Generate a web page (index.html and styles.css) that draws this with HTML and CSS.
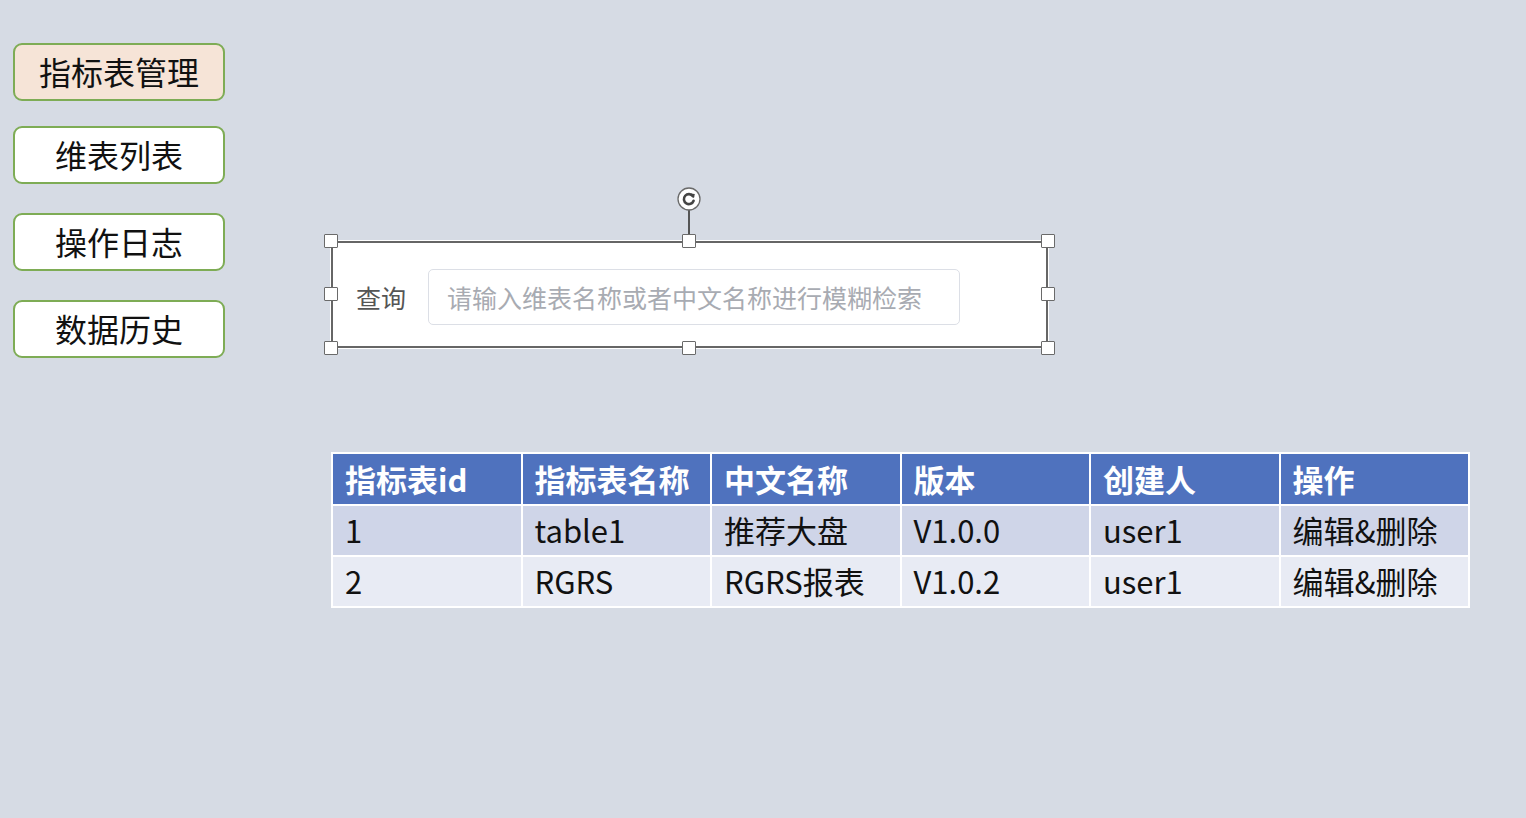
FILE: index.html
```html
<!DOCTYPE html>
<html lang="zh">
<head>
<meta charset="utf-8">
<title>指标表管理</title>
<link rel="stylesheet" href="styles.css">
</head>
<body>
<div class="page">
  <nav class="nav">
    <div class="nav-btn active">指标表管理</div>
    <div class="nav-btn">维表列表</div>
    <div class="nav-btn">操作日志</div>
    <div class="nav-btn">数据历史</div>
  </nav>
  <main class="main">
    <div class="frame">
      <div class="search">
        <span class="label">查询</span>
        <div class="input">请输入维表名称或者中文名称进行模糊检索</div>
      </div>
      <div class="rot-line"></div>
      <div class="rot">
        <svg width="24" height="24" viewBox="0 0 24 24">
          <circle cx="12" cy="12" r="11" fill="#fff" stroke="#6a6a6a" stroke-width="1.3"/>
          <path d="M15.9 9.1 A5 5 0 1 0 16.6 13.8" fill="none" stroke="#444" stroke-width="2.6" stroke-linecap="round"/>
          <path d="M13.4 6.6 L17.8 6.9 L16.9 11.2 Z" fill="#444"/>
        </svg>
      </div>
      <span class="h tl"></span><span class="h tc"></span><span class="h tr"></span>
      <span class="h ml"></span><span class="h mr"></span>
      <span class="h bl"></span><span class="h bc"></span><span class="h br"></span>
    </div>
    <table class="grid">
      <thead>
        <tr><th>指标表id</th><th>指标表名称</th><th>中文名称</th><th>版本</th><th>创建人</th><th>操作</th></tr>
      </thead>
      <tbody>
        <tr class="odd"><td>1</td><td>table1</td><td>推荐大盘</td><td>V1.0.0</td><td>user1</td><td>编辑&amp;删除</td></tr>
        <tr class="even"><td>2</td><td>RGRS</td><td>RGRS报表</td><td>V1.0.2</td><td>user1</td><td>编辑&amp;删除</td></tr>
      </tbody>
    </table>
  </main>
</div>
</body>
</html>
```
FILE: styles.css
```css
* { box-sizing: border-box; }
html, body {
  margin: 0;
  padding: 0;
  background: #d6dbe4;
  font-family: "Noto Sans CJK SC", "Noto Sans", sans-serif;
  color: #111;
}
.page {
  display: flex;
  align-items: flex-start;
  width: 1526px;
  height: 818px;
}
.nav {
  display: flex;
  flex-direction: column;
  gap: 29px;
  padding: 43px 0 0 13px;
  width: 225px;
}
.nav-btn {
  flex: none;
  width: 212px;
  height: 58px;
  border: 2px solid #7eac55;
  border-radius: 9px;
  background: #fff;
  display: flex;
  align-items: center;
  justify-content: center;
  padding-bottom: 3px;
  font-size: 32px;
  line-height: 1;
  color: #111;
}
.nav-btn.active {
  background: #f6e4d7;
  margin-bottom: -4px;
}
.main {
  padding: 241px 0 0 106px;
}
.frame {
  position: relative;
  width: 717px;
  height: 107px;
  background: #fff;
  border: 2px solid #666;
  outline: 1px solid #fff;
}
.search {
  display: flex;
  align-items: center;
  gap: 22px;
  padding: 26px 0 0 23px;
}
.label {
  font-size: 25px;
  color: #555;
  line-height: 1;
}
.input {
  width: 532px;
  height: 56px;
  border: 1.5px solid #dcdfe6;
  border-radius: 5px;
  display: flex;
  align-items: center;
  padding-left: 18px;
  font-size: 25px;
  color: #a8abb2;
  line-height: 1;
}
.h {
  position: absolute;
  width: 14px;
  height: 14px;
  background: #fff;
  border: 1px solid #6a6a6a;
  border-radius: 1px;
}
.tl { left: -9px; top: -9px; }
.tc { left: 349px; top: -9px; }
.tr { right: -9px; top: -9px; }
.ml { left: -9px; top: 44px; }
.mr { right: -9px; top: 44px; }
.bl { left: -9px; bottom: -9px; }
.bc { left: 349px; bottom: -9px; }
.br { right: -9px; bottom: -9px; }
.rot-line {
  position: absolute;
  left: 355px;
  top: -33px;
  width: 2px;
  height: 31px;
  background: #555;
}
.rot {
  position: absolute;
  left: 344px;
  top: -56px;
  width: 24px;
  height: 24px;
}
.rot svg { display: block; }
.grid {
  margin-top: 104px;
  width: 1139px;
  border-collapse: collapse;
  table-layout: fixed;
  border: 2px solid #fff;
}
.grid th, .grid td {
  border: 2px solid #fff;
  text-align: left;
  padding: 0 0 2px 12px;
  font-size: 31px;
  line-height: 1;
  height: 51px;
  white-space: nowrap;
}
.grid th {
  background: #4f72be;
  color: #fff;
  font-weight: 700;
  height: 52px;
}
.grid tr.odd td { background: #cfd5e8; color: #111; }
.grid tr.even td { background: #e8ebf4; color: #111; }
```
